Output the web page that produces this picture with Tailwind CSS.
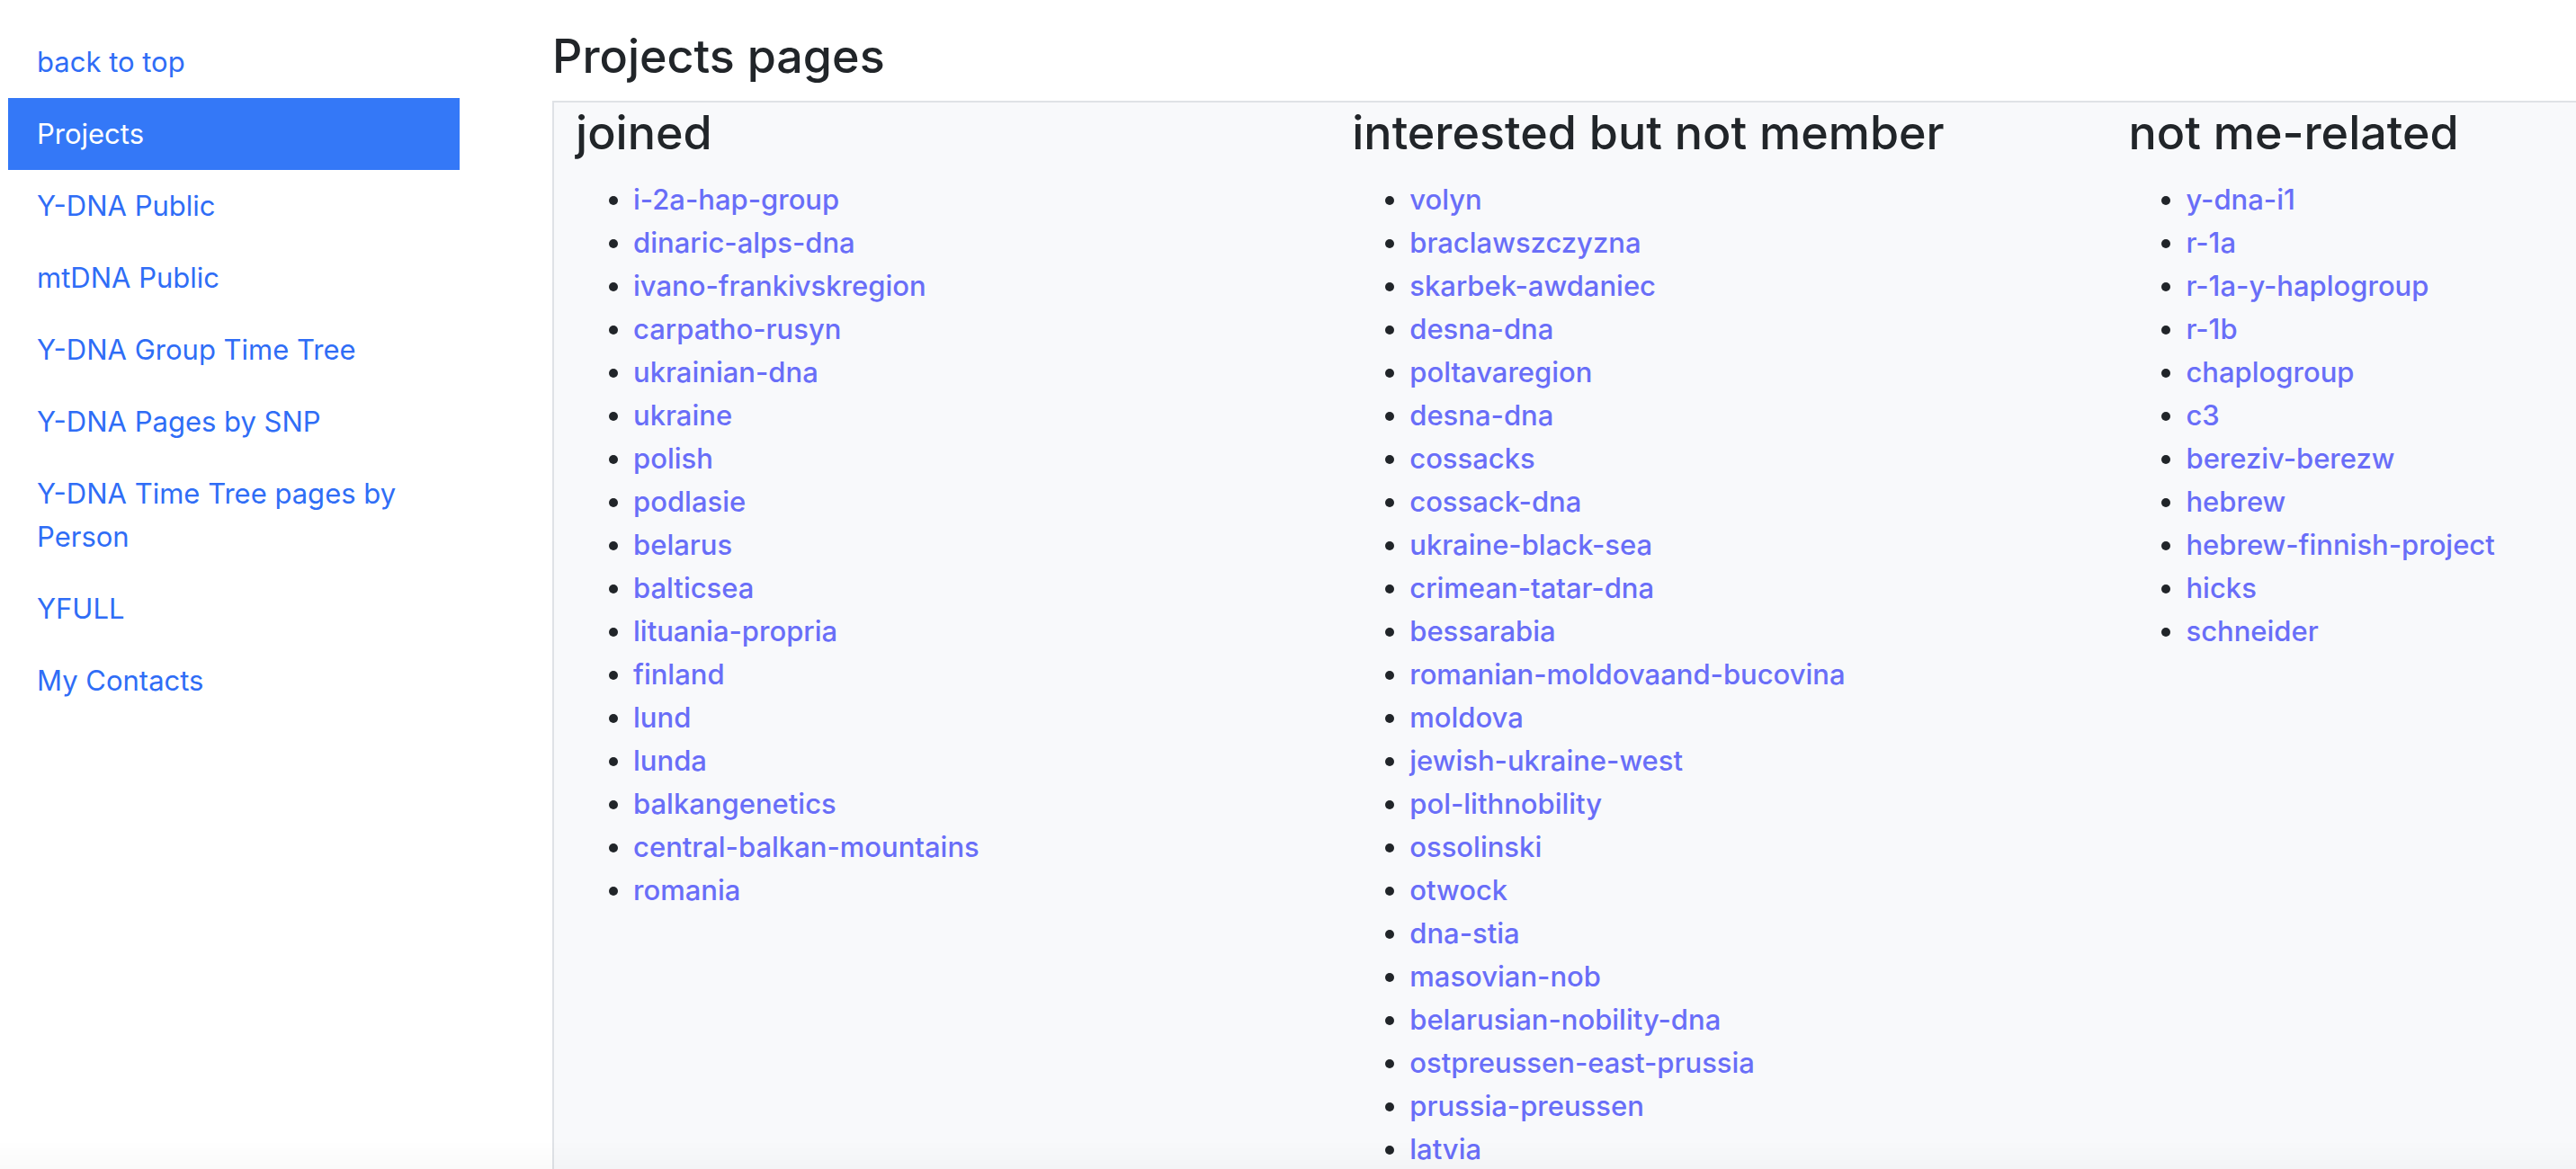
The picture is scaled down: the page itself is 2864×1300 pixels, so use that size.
<!DOCTYPE html>
<html lang="en">
<head>
<meta charset="utf-8">
<meta name="viewport" content="width=device-width, initial-scale=1">
<title>Projects pages</title>
<script src="https://cdn.jsdelivr.net/npm/@tailwindcss/browser@4"></script>
</head>
<body class="h-screen overflow-hidden bg-white font-['Inter','Liberation_Sans',sans-serif] text-[31px] leading-12 text-[#212529]">
<div class="flex h-full items-stretch">
  <aside class="w-[21.44%] shrink-0 pt-[29px] pr-[103px] pl-[9px]">
    <nav class="flex flex-col text-[#2f6df6]" aria-label="Sections">
      <a href="#top" class="px-8 py-4">back to top</a>
      <a href="#projects" class="bg-[#3478f7] px-8 py-4 text-white" aria-current="page">Projects</a>
      <a href="#ydna" class="px-8 py-4">Y-DNA Public</a>
      <a href="#mtdna" class="px-8 py-4">mtDNA Public</a>
      <a href="#group-tree" class="px-8 py-4">Y-DNA Group Time Tree</a>
      <a href="#snp" class="px-8 py-4">Y-DNA Pages by SNP</a>
      <a href="#person-tree" class="px-8 py-4">Y-DNA Time Tree pages by Person</a>
      <a href="#yfull" class="px-8 py-4">YFULL</a>
      <a href="#contacts" class="px-8 py-4">My Contacts</a>
    </nav>
  </aside>
  <main id="projects" class="flex min-w-0 flex-1 flex-col pt-[30px]">
    <h1 class="mb-4 text-[52px] leading-[66px] font-medium">Projects pages</h1>
    <div class="min-h-0 flex-1 overflow-auto border-t-2 border-l-2 border-[#dfe2e6] bg-[#f8f9fb] [scrollbar-width:none]">
      <div class="grid grid-cols-[38.4%_38.4%_38.4%]">
        <section class="px-6">
          <h2 class="mb-4 text-[52px] leading-[68px] font-medium">joined</h2>
          <ul class="list-disc pl-16 font-medium text-[#696ef8] marker:text-[#212529]">
            <li><a href="#">i-2a-hap-group</a></li>
            <li><a href="#">dinaric-alps-dna</a></li>
            <li><a href="#">ivano-frankivskregion</a></li>
            <li><a href="#">carpatho-rusyn</a></li>
            <li><a href="#">ukrainian-dna</a></li>
            <li><a href="#">ukraine</a></li>
            <li><a href="#">polish</a></li>
            <li><a href="#">podlasie</a></li>
            <li><a href="#">belarus</a></li>
            <li><a href="#">balticsea</a></li>
            <li><a href="#">lituania-propria</a></li>
            <li><a href="#">finland</a></li>
            <li><a href="#">lund</a></li>
            <li><a href="#">lunda</a></li>
            <li><a href="#">balkangenetics</a></li>
            <li><a href="#">central-balkan-mountains</a></li>
            <li><a href="#">romania</a></li>
          </ul>
        </section>
        <section class="px-6">
          <h2 class="mb-4 text-[52px] leading-[68px] font-medium">interested but not member</h2>
          <ul class="list-disc pl-16 font-medium text-[#696ef8] marker:text-[#212529]">
            <li><a href="#">volyn</a></li>
            <li><a href="#">braclawszczyzna</a></li>
            <li><a href="#">skarbek-awdaniec</a></li>
            <li><a href="#">desna-dna</a></li>
            <li><a href="#">poltavaregion</a></li>
            <li><a href="#">desna-dna</a></li>
            <li><a href="#">cossacks</a></li>
            <li><a href="#">cossack-dna</a></li>
            <li><a href="#">ukraine-black-sea</a></li>
            <li><a href="#">crimean-tatar-dna</a></li>
            <li><a href="#">bessarabia</a></li>
            <li><a href="#">romanian-moldovaand-bucovina</a></li>
            <li><a href="#">moldova</a></li>
            <li><a href="#">jewish-ukraine-west</a></li>
            <li><a href="#">pol-lithnobility</a></li>
            <li><a href="#">ossolinski</a></li>
            <li><a href="#">otwock</a></li>
            <li><a href="#">dna-stia</a></li>
            <li><a href="#">masovian-nob</a></li>
            <li><a href="#">belarusian-nobility-dna</a></li>
            <li><a href="#">ostpreussen-east-prussia</a></li>
            <li><a href="#">prussia-preussen</a></li>
            <li><a href="#">latvia</a></li>
          </ul>
        </section>
        <section class="px-6">
          <h2 class="mb-4 text-[52px] leading-[68px] font-medium">not me-related</h2>
          <ul class="list-disc pl-16 font-medium text-[#696ef8] marker:text-[#212529]">
            <li><a href="#">y-dna-i1</a></li>
            <li><a href="#">r-1a</a></li>
            <li><a href="#">r-1a-y-haplogroup</a></li>
            <li><a href="#">r-1b</a></li>
            <li><a href="#">chaplogroup</a></li>
            <li><a href="#">c3</a></li>
            <li><a href="#">bereziv-berezw</a></li>
            <li><a href="#">hebrew</a></li>
            <li><a href="#">hebrew-finnish-project</a></li>
            <li><a href="#">hicks</a></li>
            <li><a href="#">schneider</a></li>
          </ul>
        </section>
      </div>
    </div>
  </main>
</div>
<!-- Faint shade along the bottom edge of the window -->
<div class="pointer-events-none fixed inset-x-0 bottom-0 h-8 bg-linear-to-b from-black/0 to-black/2"></div>
</body>
</html>
